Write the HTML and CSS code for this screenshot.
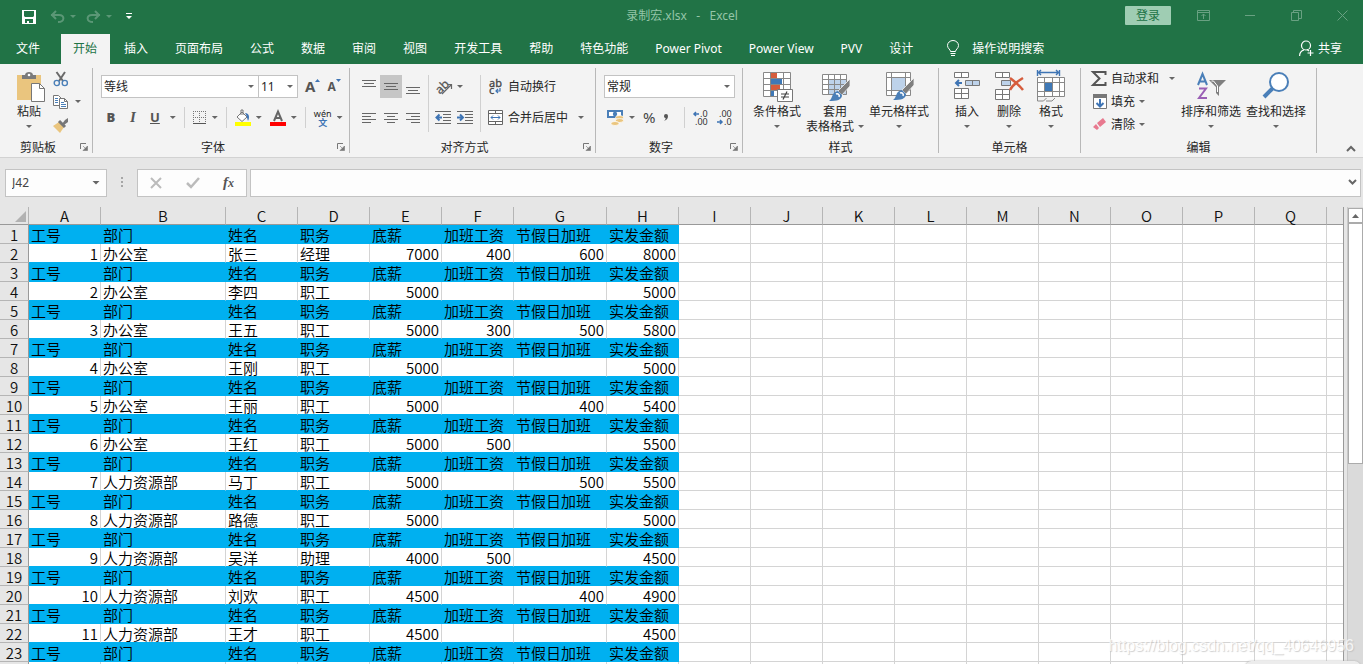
FILE: index.html
```html
<!DOCTYPE html>
<html lang="zh-CN">
<head>
<meta charset="utf-8">
<title>录制宏.xlsx - Excel</title>
<link rel="stylesheet" href="styles.css">
</head>
<body>
<svg class="defs" aria-hidden="true">
  <symbol id="launch" viewBox="0 0 8 8"><path d="M.5 6V.5H6" fill="none" stroke="#777"/><path d="M3 3l3 3M7.500 3v4.500H3z" fill="#777" stroke="#777" stroke-width=".6"/></symbol>
  <symbol id="brush" viewBox="0 0 24 24"><path d="M22 1v7l-8 9-4-4z" fill="#7f7f7f" stroke="#f3f3f3" stroke-width=".8"/><path d="M10 13l4 4c0 5-5 6-13 6 4-2 2-9 9-10z" fill="#4a7fb8"/><path d="M8 16c2-1 4 1 3 3" fill="none" stroke="#fff" stroke-width="1.500"/></symbol>
</svg>

<header class="titlebar">
  <div class="quick">
    <button aria-label="保存"><svg width="14" height="14" viewBox="0 0 14 14"><path d="M0 0h14v14H0z" fill="#fff"/><path d="M2 1h10v5l-1 1H3L2 6zM3 9h8v4H7v-2H5v2H3z" fill="#217346"/></svg></button>
    <button class="dim" aria-label="撤消"><svg width="15" height="13" viewBox="0 0 15 13"><path d="M1 5h8c6 0 6 7-1 7M6 1L2 5l4 4" fill="none" stroke="#5b9776" stroke-width="2"/></svg><i class="caret"></i></button>
    <button class="dim" aria-label="恢复"><svg width="15" height="13" viewBox="0 0 15 13"><path d="M14 5H6c-6 0-6 7 1 7M9 1l4 4-4 4" fill="none" stroke="#5b9776" stroke-width="2"/></svg><i class="caret"></i></button>
    <button aria-label="自定义快速访问工具栏"><svg width="6" height="7" viewBox="0 0 6 7"><path d="M0 0h6v1H0zM0 3h6L3 6z" fill="#fff"/></svg></button>
  </div>
  <div class="doc-title">录制宏.xlsx&nbsp;&nbsp; -&nbsp;&nbsp; Excel</div>
  <div class="window">
    <button class="login">登录</button>
    <button aria-label="功能区显示选项"><svg width="13" height="11" viewBox="0 0 13 11"><path d="M.5.5h12v10H.5zM.5 2.500h12M6.500 9V4M4.500 6l2-2 2 2" fill="none" stroke="#69a182"/></svg></button>
    <button aria-label="最小化"><svg width="11" height="11" viewBox="0 0 11 11"><path d="M0 5.500h10" stroke="#69a182"/></svg></button>
    <button aria-label="还原"><svg width="11" height="11" viewBox="0 0 11 11"><path d="M.5 2.500h7v8h-7zM2.500 2.500v-2h8v8h-3" fill="none" stroke="#69a182"/></svg></button>
    <button aria-label="关闭"><svg width="11" height="11" viewBox="0 0 11 11"><path d="M.5.5l10 10M10.500.5l-10 10" stroke="#69a182"/></svg></button>
  </div>
</header>

<nav class="tabs">
  <button class="file">文件</button>
  <button class="active">开始</button>
  <button>插入</button>
  <button>页面布局</button>
  <button>公式</button>
  <button>数据</button>
  <button>审阅</button>
  <button>视图</button>
  <button>开发工具</button>
  <button>帮助</button>
  <button>特色功能</button>
  <button>Power Pivot</button>
  <button>Power View</button>
  <button>PVV</button>
  <button>设计</button>
  <button class="tell"><svg width="12" height="17" viewBox="0 0 12 17"><path d="M3.500 11.500c0-2-3-3-3-6a5.500 5 0 0 1 11 0c0 3-3 4-3 6zM3.500 13.500h5M4 15.500h4" fill="none" stroke="#fff"/></svg>操作说明搜索</button>
  <button class="share"><svg width="15" height="17" viewBox="0 0 15 17"><circle cx="7" cy="5.500" r="4.500" fill="none" stroke="#fff" stroke-width="1.200"/><path d="M.6 16c0-3.500 2-5.500 4.500-6.200M8 9.500l2 1.500M11.500 10v6M8.500 13h6" fill="none" stroke="#fff" stroke-width="1.200"/></svg>共享</button>
</nav>

<main class="ribbon">
  <section class="group clipboard">
    <div class="body">
      <button class="big">
        <svg width="32" height="32" viewBox="0 0 32 32"><path d="M4 5h24v25H4z" fill="#eac57e"/><path d="M9 9V5h3c0-4 8-4 8 0h3v4z" fill="#7a7a7a"/><circle cx="16" cy="5" r="1.300" fill="#fff"/><path d="M18.500 13.500h8l5 5v13h-13z" fill="#fff" stroke="#777"/><path d="M26.500 13.500v5h5" fill="none" stroke="#777"/></svg>
        <span>粘贴</span><i class="caret"></i>
      </button>
      <div class="stack">
        <button aria-label="剪切"><svg width="16" height="16" viewBox="0 0 16 16"><path d="M3.500 1L10 10M12 1L6 10" stroke="#6a6a6a" stroke-width="2"/><circle cx="3.800" cy="12" r="2.600" fill="none" stroke="#4a7fb8" stroke-width="1.400"/><circle cx="11.800" cy="12" r="2.600" fill="none" stroke="#4a7fb8" stroke-width="1.400"/></svg></button>
        <button aria-label="复制"><svg width="16" height="16" viewBox="0 0 16 16"><path d="M.5 1.500h5l3 3v7h-8z" fill="#fff" stroke="#777"/><path d="M2 4.500h3M2 6.500h3M2 8.500h3" stroke="#4a7fb8"/><path d="M6.500 4.500h5l3 3v7h-8z" fill="#fff" stroke="#777"/><path d="M11.500 4.500v3h3" fill="none" stroke="#777"/><path d="M8 8.500h3M8 10.500h5M8 12.500h5" stroke="#4a7fb8"/></svg><i class="caret"></i></button>
        <button aria-label="格式刷"><svg width="16" height="16" viewBox="0 0 16 16"><path d="M0 9l6-4 5 5-4 6z" fill="#eac57e"/><path d="M6 4l6 6" stroke="#777" stroke-width="3"/><path d="M9 7l3-4 3-2v4l-4 3z" fill="#777"/></svg></button>
      </div>
    </div>
    <h2>剪贴板</h2><button class="launch" aria-label="剪贴板设置"><svg width="8" height="8"><use href="#launch"/></svg></button>
  </section>

  <section class="group font">
    <div class="body rows">
      <div class="row">
        <label class="combo name"><select aria-label="字体"><option>等线</option></select><i class="caret"></i></label>
        <label class="combo size"><select aria-label="字号"><option>11</option></select><i class="caret"></i></label>
        <button class="grow" aria-label="增大字号"><b>A</b><svg width="5" height="3"><path d="M0 3h5L2.500 0z" fill="#3e74b4"/></svg></button>
        <button class="grow small" aria-label="减小字号"><b>A</b><svg width="5" height="3"><path d="M0 0h5L2.500 3z" fill="#3e74b4"/></svg></button>
      </div>
      <div class="row tools">
        <button class="glyph"><b>B</b></button>
        <button class="glyph serif"><em>I</em></button>
        <button class="glyph under"><u>U</u><i class="caret"></i></button>
        <span class="rule"></span>
        <button aria-label="边框"><svg width="14" height="14" viewBox="0 0 14 14"><path d="M.5 0v13M6.500 0v13M12.500 0v13M0 .5h13M0 6.500h13" stroke="#777" stroke-dasharray="1 1"/><path d="M0 12.500h13" stroke="#555"/></svg><i class="caret"></i></button>
        <span class="rule"></span>
        <button aria-label="填充颜色"><svg width="16" height="16" viewBox="0 0 16 16"><path d="M2 7l5-5 5 5-5 4.500zM6 5V0h2v5" fill="#fff" stroke="#777"/><path d="M10 3c4 0 5 4 3 8-1-3-1-5-3-8z" fill="#3e74b4"/><path d="M0 12h16v4H0z" fill="#ff0"/></svg><i class="caret"></i></button>
        <button aria-label="字体颜色"><svg width="16" height="16" viewBox="0 0 16 16"><path d="M4 11L8 1.500 12 11M5.500 8h5" fill="none" stroke="#666" stroke-width="2"/><path d="M0 12h16v4H0z" fill="#f00"/></svg><i class="caret"></i></button>
        <span class="rule"></span>
        <button class="pinyin" aria-label="拼音指南"><span>wén<b>文</b></span><i class="caret"></i></button>
      </div>
    </div>
    <h2>字体</h2><button class="launch" aria-label="字体设置"><svg width="8" height="8"><use href="#launch"/></svg></button>
  </section>

  <section class="group align">
    <div class="body">
      <div class="rows">
        <div class="row">
          <button class="cell" aria-label="顶端对齐"><svg width="14" height="16"><path d="M0 1.500h14M2 4.500h10M0 7.500h14" stroke="#666"/></svg></button>
          <button class="cell on" aria-label="垂直居中"><svg width="14" height="16"><path d="M0 4.500h14M2 7.500h10M0 10.500h14" stroke="#666"/></svg></button>
          <button class="cell" aria-label="底端对齐"><svg width="14" height="16"><path d="M0 8.500h14M2 11.500h10M0 14.500h14" stroke="#666"/></svg></button>
        </div>
        <div class="row">
          <button class="cell" aria-label="左对齐"><svg width="14" height="12"><path d="M0 1.500h14M0 4.500h9M0 7.500h14M0 10.500h9" stroke="#666"/></svg></button>
          <button class="cell" aria-label="居中"><svg width="14" height="12"><path d="M0 1.500h14M3 4.500h8M0 7.500h14M3 10.500h8" stroke="#666"/></svg></button>
          <button class="cell" aria-label="右对齐"><svg width="14" height="12"><path d="M0 1.500h14M5 4.500h9M0 7.500h14M5 10.500h9" stroke="#666"/></svg></button>
        </div>
      </div>
      <div class="rows bar">
        <div class="row"><button class="wide" aria-label="方向"><svg width="17" height="16" viewBox="0 0 17 16"><text x="-1" y="12" font-size="12" fill="#555" stroke="#555" stroke-width=".3" transform="rotate(-45 6 8)">ab</text><path d="M6 15l9-9M11 5.500h4.500V10" fill="none" stroke="#666" stroke-width="1.200"/></svg><i class="caret"></i></button></div>
        <div class="row">
          <button class="cell" aria-label="减少缩进量"><svg width="16" height="14" viewBox="0 0 16 14"><path d="M0 .5h16M8 3.500h8M8 6.500h8M8 9.500h8M0 12.500h16" stroke="#666"/><path d="M7 6.500H2M4.500 3.500l-3 3 3 3" fill="none" stroke="#3e74b4" stroke-width="2"/></svg></button>
          <button class="cell" aria-label="增加缩进量"><svg width="16" height="14" viewBox="0 0 16 14"><path d="M0 .5h16M8 3.500h8M8 6.500h8M8 9.500h8M0 12.500h16" stroke="#666"/><path d="M0 6.500h5M3 3.500l3 3-3 3" fill="none" stroke="#3e74b4" stroke-width="2"/></svg></button>
        </div>
      </div>
      <div class="rows bar labels">
        <div class="row"><button class="text"><svg width="15" height="18" viewBox="0 0 15 18"><text x="1" y="9" font-size="11" fill="#444" stroke="#444" stroke-width=".3">ab</text><text x="1" y="16" font-size="11" fill="#444" stroke="#444" stroke-width=".3">c</text><path d="M12 10v3H8M10 11l-2 2 2 2" fill="none" stroke="#3e74b4" stroke-width="1.200"/></svg>自动换行</button></div>
        <div class="row"><button class="text"><svg width="15" height="15" viewBox="0 0 15 15"><path d="M.5.5h14v14H.5zM.5 3.500h14M.5 11.500h14M7.500.5v3M7.500 11.500v3" fill="#fff" stroke="#666"/><path d="M3 7.500h9M5 5.500l-2 2 2 2M10 5.500l2 2-2 2" fill="none" stroke="#3e74b4"/></svg>合并后居中<i class="caret"></i></button></div>
      </div>
    </div>
    <h2>对齐方式</h2><button class="launch" aria-label="对齐设置"><svg width="8" height="8"><use href="#launch"/></svg></button>
  </section>

  <section class="group number">
    <div class="body rows">
      <div class="row"><label class="combo format"><select aria-label="数字格式"><option>常规</option></select><i class="caret"></i></label></div>
      <div class="row tools">
        <button aria-label="会计数字格式"><svg width="17" height="17" viewBox="0 0 17 17"><path d="M0 1h16v8H0z" fill="#4a7fb8"/><path d="M2 3h12v4H2z" fill="#fff"/><circle cx="8" cy="5" r="2.200" fill="#4a7fb8"/><ellipse cx="12.500" cy="8.500" rx="4" ry="2" fill="#eac57e" stroke="#fff" stroke-width=".7"/><ellipse cx="12.500" cy="11.500" rx="4" ry="2" fill="#eac57e" stroke="#fff" stroke-width=".7"/><ellipse cx="8" cy="14.500" rx="4" ry="2" fill="#eac57e" stroke="#fff" stroke-width=".7"/></svg><i class="caret"></i></button>
        <button class="percent">%</button>
        <button aria-label="千位分隔样式"><svg width="6" height="9" viewBox="0 0 6 9"><path d="M1 3a2 2 0 1 1 4 0c0 2-1 4-4 5 1-1 2-2 1.500-3C1.500 5 1 4 1 3z" fill="#555"/></svg></button>
        <span class="rule"></span>
        <button aria-label="增加小数位数"><svg width="16" height="16" viewBox="0 0 16 16"><path d="M6 4H1M3 2L1 4l2 2" fill="none" stroke="#3e74b4" stroke-width="1.500"/><text x="7" y="7" font-size="9" fill="#333">.0</text><text x="2" y="15" font-size="9" fill="#333">.00</text></svg></button>
        <button aria-label="减少小数位数"><svg width="16" height="16" viewBox="0 0 16 16"><path d="M0 12h5M3 10l2 2-2 2" fill="none" stroke="#3e74b4" stroke-width="1.500"/><text x="2" y="7" font-size="9" fill="#333">.00</text><text x="7" y="15" font-size="9" fill="#333">.0</text></svg></button>
      </div>
    </div>
    <h2>数字</h2><button class="launch" aria-label="数字设置"><svg width="8" height="8"><use href="#launch"/></svg></button>
  </section>

  <section class="group styles">
    <div class="body">
      <button class="big">
        <svg width="32" height="32" viewBox="0 0 32 32"><path d="M2.500 2.500h27v24h-27zM9.500 2.500v24M22.500 2.500v24M2.500 8.500h27M2.500 14.500h27M2.500 20.500h27" fill="#fff" stroke="#888"/><path d="M10 3h6v5h-6zM10 15h9v5h-9z" fill="#d65c3c"/><path d="M10 9h11v5H10zM10 21h3v5h-3z" fill="#3f79b7"/><path d="M16.500 19.500h15v12h-15z" fill="#fff" stroke="#777"/><path d="M20 24h8M20 27h8M26 21.500l-4 8" stroke="#444" stroke-width="1.200"/></svg>
        <span>条件格式</span><i class="caret"></i>
      </button>
      <button class="big">
        <svg width="32" height="32" viewBox="0 0 32 32"><path d="M3.500 4.500h24v20h-24z" fill="#fff"/><path d="M9 10h19v15H9z" fill="#bdd2ea"/><path d="M3.500 4.500h24v20h-24zM9.500 4.500v20M15.500 4.500v20M21.500 4.500v20M3.500 9.500h24M3.500 14.500h24M3.500 19.500h24" fill="none" stroke="#888"/><use href="#brush" x="9" y="8" width="24" height="24"/></svg>
        <span>套用</span><span class="inline">表格格式<i class="caret"></i></span>
      </button>
      <button class="big">
        <svg width="32" height="32" viewBox="0 0 32 32"><path d="M3.500 2.500h24v23h-24zM8.500 2.500v23M22.500 2.500v23M3.500 7.500h24M3.500 20.500h24" fill="#fff" stroke="#888"/><path d="M9 8h13v12H9z" fill="#bdd2ea"/><use href="#brush" x="9" y="7" width="24" height="24"/></svg>
        <span>单元格样式</span><i class="caret"></i>
      </button>
    </div>
    <h2>样式</h2>
  </section>

  <section class="group cells">
    <div class="body">
      <button class="big">
        <svg width="32" height="32" viewBox="0 0 32 32"><path d="M3.500 2.500h14v5h-14zM10.500 2.500v5M3.500 18.500h14v10h-14zM10.500 18.500v10M3.500 23.500h14" fill="#fff" stroke="#777"/><path d="M14.500 10.500h14v5h-14zM21.500 10.500v5" fill="#bdd2ea" stroke="#777"/><path d="M11 13H5M8 10l-3 3 3 3" fill="none" stroke="#3e74b4" stroke-width="2"/></svg>
        <span>插入</span><i class="caret"></i>
      </button>
      <button class="big">
        <svg width="32" height="32" viewBox="0 0 32 32"><path d="M2.500 2.500h14v5h-14zM9.500 2.500v5M2.500 19.500h14v10h-14zM9.500 19.500v10M2.500 24.500h14" fill="#fff" stroke="#777"/><path d="M8.500 10.500h9v5h-9z" fill="#bdd2ea" stroke="#777"/><path d="M17 8c4 3 10 8 13 12M30 8c-5 3-11 8-13 12" fill="none" stroke="#d65c3c" stroke-width="2.500"/></svg>
        <span>删除</span><i class="caret"></i>
      </button>
      <button class="big">
        <svg width="32" height="32" viewBox="0 0 32 32"><path d="M2.500 0v6M24.500 0v6M3 2.500h21M6 0L3.500 2.500 6 5M21 0l2.500 2.500L21 5" fill="none" stroke="#3e74b4" stroke-width="1.400"/><path d="M2.500 7.500h27v19h-27zM9.500 7.500v19M17.500 7.500v19M24.500 7.500v19M2.500 12.500h27M2.500 21.500h27" fill="#fff" stroke="#888"/><path d="M10 13h7v8h-7z" fill="#3f79b7"/><path d="M2.500 26v5h6l3-3M11 31h6l3-3" fill="none" stroke="#888"/></svg>
        <span>格式</span><i class="caret"></i>
      </button>
    </div>
    <h2>单元格</h2>
  </section>

  <section class="group edit">
    <div class="body">
      <div class="stack">
        <button class="text"><svg width="15" height="15" viewBox="0 0 15 15"><path d="M13.500 4V1H1l6.500 6.500L1 14h12.500v-3" fill="none" stroke="#555" stroke-width="2"/></svg>自动求和<i class="caret far"></i></button>
        <button class="text"><svg width="15" height="15" viewBox="0 0 15 15"><path d="M1.500 1.500h13v13h-13z" fill="#fff" stroke="#777"/><path d="M1 0h14v4H1z" fill="#777"/><path d="M8 5v7M4.500 9L8 12.500 11.500 9" fill="none" stroke="#3e74b4" stroke-width="2"/></svg>填充<i class="caret"></i></button>
        <button class="text"><svg width="15" height="15" viewBox="0 0 15 15"><path d="M5 6l6-5 3 4-6 5zM4 7l3 4-2 2-4-3z" fill="#e8798f"/></svg>清除<i class="caret"></i></button>
      </div>
      <button class="big">
        <svg width="32" height="32" viewBox="0 0 32 32"><path d="M3 15L7.500 4 12 15M4.500 11.500h6" fill="none" stroke="#4a7fb8" stroke-width="2"/><path d="M4 18.500h7L4 28h8" fill="none" stroke="#9a5fb5" stroke-width="2"/><path d="M14 10h17l-7 7v9l-3-3v-6z" fill="#7f7f7f"/><path d="M16.500 11h2l4 5v6" fill="none" stroke="#fff"/></svg>
        <span>排序和筛选</span><i class="caret"></i>
      </button>
      <button class="big">
        <svg width="32" height="32" viewBox="0 0 32 32"><circle cx="19" cy="12" r="9" fill="#fff" stroke="#4a7fb8" stroke-width="2"/><path d="M12.500 18.500L4 27" stroke="#4a7fb8" stroke-width="4"/></svg>
        <span>查找和选择</span><i class="caret"></i>
      </button>
    </div>
    <h2>编辑</h2>
  </section>
  <button class="collapse" aria-label="折叠功能区"><svg width="10" height="7"><path d="M1 6l4-4 4 4" fill="none" stroke="#666" stroke-width="2"/></svg></button>
</main>

<div class="formula">
  <label class="namebox"><input value="J42" aria-label="名称框"><i class="caret"></i></label>
  <svg class="grip" width="2" height="11"><path d="M0 0h2v2H0zM0 4h2v2H0zM0 8h2v2H0z" fill="#a6a6a6"/></svg>
  <div class="actions">
    <button aria-label="取消"><svg width="12" height="12"><path d="M1 1l10 10M11 1L1 11" stroke="#bbb" stroke-width="2"/></svg></button>
    <button aria-label="输入"><svg width="14" height="12"><path d="M1 6l4 4 8-9" fill="none" stroke="#bbb" stroke-width="2.500"/></svg></button>
    <button class="fx" aria-label="插入函数"><em>f<small>x</small></em></button>
  </div>
  <label class="entry"><input aria-label="编辑栏"><svg width="9" height="7"><path d="M1 1l3.500 3.500L8 1" fill="none" stroke="#666" stroke-width="2"/></svg></label>
</div>

<div class="workspace">
  <table class="sheet">
    <colgroup><col class="c-head"><col class="c"><col class="c-b"><col class="c"><col class="c"><col class="c"><col class="c"><col class="c-g"><col class="c"><col class="c"><col class="c"><col class="c"><col class="c"><col class="c"><col class="c"><col class="c"><col class="c"><col class="c"><col></colgroup>
    <thead><tr id="letters"></tr></thead>
    <tbody id="rows"></tbody>
  </table>
  <div class="scroll">
    <button aria-label="向上滚动"><svg width="7" height="4"><path d="M0 4h7L3.500 0z" fill="#666"/></svg></button>
    <div class="thumb"></div>
  </div>
</div>
<div class="popup"></div>
<div class="watermark">https://blog.csdn.net/qq_40646956</div>
<script src="script.js"></script>
</body>
</html>
```
FILE: styles.css
```css
* { box-sizing: border-box; }
body {
  margin: 0;
  height: 100vh;
  overflow: hidden;
  display: flex;
  flex-direction: column;
  background: #e6e6e6;
  color: #262626;
  font: 12px/15px "Noto Sans", "Noto Sans CJK SC", sans-serif;
}
button, input, select { font: inherit; color: inherit; }
button {
  display: flex;
  align-items: center;
  justify-content: center;
  padding: 0;
  border: 0;
  background: none;
  white-space: nowrap;
}
svg { display: block; flex: none; overflow: visible; }
.defs { position: absolute; width: 0; height: 0; }
.caret {
  flex: none;
  width: 6px;
  height: 3px;
  background: #666;
  clip-path: polygon(0 0, 100% 0, 50% 100%);
}

.titlebar {
  flex: none;
  display: grid;
  grid-template-columns: 1fr auto 1fr;
  align-items: center;
  height: 34px;
  padding: 0 15px 4px 22px;
  background: #217346;
}
.quick { display: flex; align-items: center; gap: 14px; padding-top: 3px; }
.quick .dim { gap: 5px; }
.quick .dim .caret { background: #5b9776; }
.quick button:nth-child(3) { margin-left: -4px; }
.doc-title { padding-right: 6px; color: #94c5a8; }
.window { display: flex; align-items: center; justify-content: flex-end; gap: 35px; }
.login {
  width: 46px;
  height: 19px;
  margin-right: -9px;
  border-radius: 1px;
  background: #9fcdb3;
  color: #217346;
}

.tabs { flex: none; display: flex; gap: 1px; height: 30px; background: #217346; color: #fff; }
.tabs button { padding: 0 13px 2px; }
.tabs .file { padding: 0 16px 2px; margin-right: 4px; }
.tabs .active { background: #f3f3f3; color: #217346; padding-left: 12px; }
.tabs .tell { gap: 13px; padding-left: 20px; }
.tabs .share { gap: 4px; margin-left: auto; padding-right: 21px; }

.ribbon {
  flex: none;
  display: flex;
  height: 94px;
  padding: 4px 0;
  background: #f3f3f3;
  border-bottom: 1px solid #d2d2d2;
}
.group {
  flex: none;
  display: grid;
  grid-template-columns: 1fr auto;
  grid-template-rows: 72px 14px;
  border-right: 1px solid #b8b8b8;
}
.group h2 { margin: 0; font-size: 12px; font-weight: 400; text-align: center; grid-column: 1; grid-row: 2; }
.launch { grid-column: 2; grid-row: 2; margin: 0 4px; }
.body { display: flex; grid-column: 1 / 3; }
.rows { display: flex; flex-direction: column; gap: 8px; padding-top: 7px; }
.row { display: flex; align-items: center; height: 23px; }
.stack { display: flex; flex-direction: column; margin-top: -1px; }
.stack button { height: 23px; justify-content: flex-start; gap: 6px; }
.big { flex-direction: column; justify-content: flex-start; padding-top: 2px; }
.big > span { margin-top: 2px; }
.big > span + .inline { margin-top: 0; }
.big > .caret { margin-top: 6px; }
.inline { display: flex; align-items: center; gap: 4px; }
.text { gap: 5px; }
.rule { flex: none; width: 1px; height: 21px; background: #d0d0d0; }
.combo { display: flex; align-items: center; height: 23px; background: #fff; border: 1px solid #c3c3c3; padding-right: 4px; }
.combo select { flex: 1; min-width: 0; height: 21px; appearance: none; border: 0; background: none; padding: 0 2px; }

.clipboard { width: 93px; }
.clipboard .body { padding-left: 13px; gap: 8px; }

.font { width: 257px; }
.font .body { padding-left: 8px; }
.name { width: 158px; }
.size { width: 40px; margin-left: -1px; }
.grow { align-items: flex-start; margin-left: 7px; color: #555; font-size: 15px; }
.grow.small { font-size: 12px; }
.tools button { gap: 5px; }
.font .tools { gap: 8px; padding-left: 5px; }
.glyph { width: 10px; margin-right: 4px; font-size: 13px; font-weight: 700; color: #555; }
.tools .under { width: auto; margin-right: 0; gap: 10px; }
.glyph.serif { font-family: "Liberation Serif", serif; font-size: 15px; }
.pinyin span { display: flex; flex-direction: column; align-items: center; font-size: 9px; line-height: 9px; }
.pinyin b { color: #3e74b4; }

.align { width: 246px; }
.align .body { padding-left: 8px; }
.cell { width: 22px; height: 23px; }
.cell.on { background: #c6c6c6; }
.bar { position: relative; padding-left: 4px; margin-left: 4px; }
.bar::before { content: ""; position: absolute; left: 0; top: 7px; bottom: 8px; width: 1px; background: #d0d0d0; }
.bar.labels { padding-left: 8px; }
.wide { gap: 4px; padding-left: 4px; }
.labels .caret { margin-left: 5px; }

.number { width: 147px; }
.number .body { padding-left: 8px; }
.format { width: 131px; }
.number .tools { gap: 8px; padding-left: 3px; }
.number .rule { margin-left: 7px; }
.percent { font-size: 15px; color: #444; }

.styles { width: 196px; }
.styles .body { padding-left: 10px; gap: 5px; }

.cells { width: 142px; }
.cells .body { padding-left: 12px; gap: 10px; }

.edit { width: 236px; }
.edit .body { padding-left: 11px; gap: 5px; }
.edit .stack { width: 84px; }
.edit .stack .text { gap: 4px; }
.edit .far { margin-left: 6px; }
.collapse { margin: auto 7px 1px auto; }

.formula { flex: none; display: flex; align-items: center; height: 49px; padding: 0 2px 0 5px; }
.namebox, .actions, .entry { display: flex; align-items: center; height: 28px; background: #fdfdfd; border: 1px solid #c3c3c3; }
.formula input { flex: 1; min-width: 0; border: 0; background: none; padding: 0 6px; outline: 0; color: #444; }
.namebox { width: 102px; padding-right: 6px; }
.namebox .caret { width: 8px; height: 4px; }
.grip { margin: 0 14px; }
.actions { width: 110px; justify-content: space-between; padding: 0 12px; }
.fx { font: 700 15px/15px "Liberation Serif", serif; color: #555; }
.fx small { font-size: 12px; }
.entry { flex: 1; margin-left: 3px; padding-right: 3px; }

.workspace { flex: 1; min-height: 0; display: flex; align-items: flex-start; overflow: hidden; }
.sheet {
  flex: 1;
  min-width: 0;
  table-layout: fixed;
  border-collapse: separate;
  border-spacing: 0;
  border-right: 1px solid #999;
  background: #fff;
  color: #000;
  font: 350 15px/17px "Noto Sans CJK SC", sans-serif;
}
.c-head { width: 29px; }
.c { width: 72px; }
.c-b { width: 125px; }
.c-g { width: 93px; }
.sheet th { padding: 0; height: 18px; font-weight: 350; background: #e6e6e6; color: #111; }
.sheet thead th { border-right: 1px solid #b5b5b5; border-bottom: 1px solid #999; }
.sheet thead th:last-child { border-right: 0; }
.corner svg { margin: 2px 2px 0 auto; }
.sheet tbody th { height: 19px; padding-top: 1px; border-right: 1px solid #999; border-bottom: 1px solid #b5b5b5; }
.sheet td { height: 19px; padding: 1px 2px 0; border-right: 1px solid #d4d4d4; border-bottom: 1px solid #d4d4d4; white-space: nowrap; }
.sheet td:last-child { border-right: 0; }
.sheet .title { background: #00b0f0; border-color: #00b0f0; }
.sheet .data { border-bottom-color: #00b0f0; }
.sheet .num { text-align: right; }

.scroll { width: 16px; margin-left: 3px; align-self: stretch; background: #dadada; border-left: 1px solid #c8c8c8; }
.scroll button { width: 100%; height: 15px; margin-top: 1px; background: #fff; border: 1px solid #ababab; }
.scroll .thumb { height: 241px; background: #fff; border: 1px solid #ababab; }
.popup { position: absolute; right: 2px; bottom: -10px; width: 116px; height: 13px; border-radius: 8px; background: #ececec; box-shadow: 0 0 2px #aaa; }
.watermark { position: absolute; right: 9px; bottom: 8px; font: 16px/20px "Liberation Sans", sans-serif; color: #fff; text-shadow: 1px 1px 1px #bbb; opacity: .7; }
```
FILE: script.js
```js
const titles = ["工号", "部门", "姓名", "职务", "底薪", "加班工资", "节假日加班", "实发金额"];
const staff = [
  [1, "办公室", "张三", "经理", 7000, 400, 600, 8000],
  [2, "办公室", "李四", "职工", 5000, "", "", 5000],
  [3, "办公室", "王五", "职工", 5000, 300, 500, 5800],
  [4, "办公室", "王刚", "职工", 5000, "", "", 5000],
  [5, "办公室", "王丽", "职工", 5000, "", 400, 5400],
  [6, "办公室", "王红", "职工", 5000, 500, "", 5500],
  [7, "人力资源部", "马丁", "职工", 5000, "", 500, 5500],
  [8, "人力资源部", "路德", "职工", 5000, "", "", 5000],
  [9, "人力资源部", "吴洋", "助理", 4000, 500, "", 4500],
  [10, "人力资源部", "刘欢", "职工", 4500, "", 400, 4900],
  [11, "人力资源部", "王才", "职工", 4500, "", "", 4500]
];
const blanks = "<td></td>".repeat(10);

document.getElementById("letters").innerHTML =
  '<th class="corner"><svg width="11" height="11"><path d="M11 0v11H0z" fill="#b2b2b2"/></svg></th>' +
  [..."ABCDEFGHIJKLMNOPQ"].map(c => `<th>${c}</th>`).join("") + "<th></th>";

const titleCells = titles.map(t => `<td class="title">${t}</td>`).join("");
let html = "";
for (let n = 1; n <= 23; n++) {
  const cells = n % 2
    ? titleCells
    : staff[n / 2 - 1].map(v => `<td class="data${typeof v === "number" ? " num" : ""}">${v}</td>`).join("");
  html += `<tr><th>${n}</th>${cells}${blanks}</tr>`;
}
html += `<tr><th></th>${"<td></td>".repeat(8)}${blanks}</tr>`;
document.getElementById("rows").innerHTML = html;
```
